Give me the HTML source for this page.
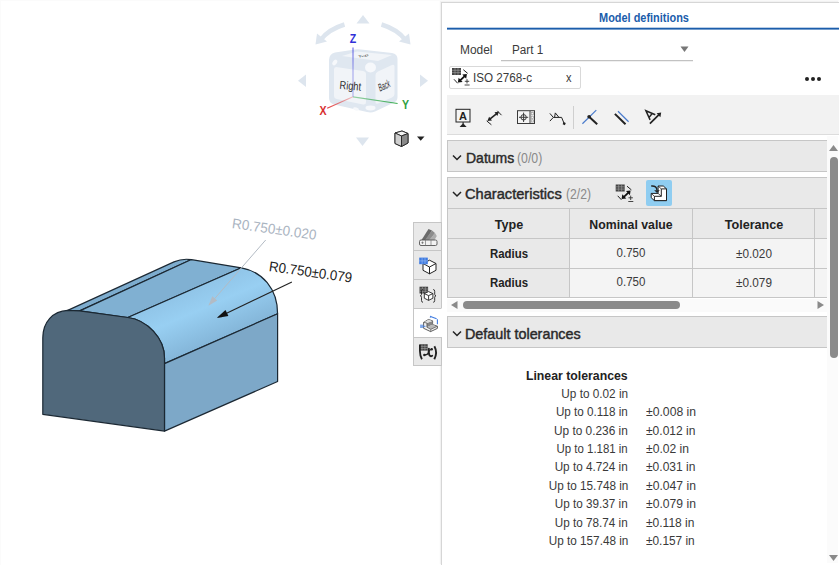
<!DOCTYPE html>
<html>
<head>
<meta charset="utf-8">
<title>Model definitions</title>
<style>
html,body{margin:0;padding:0;}
body{width:839px;height:565px;overflow:hidden;background:#fff;position:relative;font-family:"Liberation Sans",sans-serif;font-size:12px;color:#3a3a3a;}
.abs{position:absolute;}
.t{position:absolute;white-space:nowrap;line-height:1;transform-origin:0 0;}
.tr{position:absolute;white-space:nowrap;line-height:1;transform-origin:100% 0;text-align:right;}
.tc{position:absolute;white-space:nowrap;line-height:1;text-align:center;transform-origin:50% 0;}
.b{font-weight:bold;color:#222;}
.m{font-weight:normal;color:#2a2a2a;-webkit-text-stroke:0.45px #2a2a2a;}
#panel{left:441px;top:2px;width:398px;height:563px;background:#fff;border-left:1px solid #d6d6d6;border-top:1px solid #d6d6d6;box-sizing:border-box;box-shadow:-1px -1px 1px rgba(0,0,0,0.05);}
.sec{position:absolute;left:447px;width:380px;background:#e9e9e9;border:1px solid #c6c6c6;border-right:none;box-sizing:border-box;}
.cell{position:absolute;box-sizing:border-box;border-right:1px solid #c6c6c6;border-bottom:1px solid #c6c6c6;background:#f4f4f4;}
.hc{background:#e9e9e9;}
.sbtn{position:absolute;left:413px;width:29px;height:29px;box-sizing:border-box;background:#e9e9e9;border:1px solid #c6c6c6;}
</style>
</head>
<body>
<div class="abs" style="left:0;top:0;width:839px;height:1px;background:#fbfbfb;"></div><div class="abs" style="left:0;top:0;width:1px;height:565px;background:#fbfbfb;"></div>

<!-- ============ 3D VIEWPORT ============ -->
<svg class="abs" style="left:0;top:0" width="442" height="565" viewBox="0 0 442 565">
  <defs>
    <linearGradient id="filletg" gradientUnits="userSpaceOnUse" x1="200" y1="275" x2="228" y2="340">
      <stop offset="0" stop-color="#8dc0e3"/>
      <stop offset="0.45" stop-color="#98cff2"/>
      <stop offset="1" stop-color="#82b3d6"/>
    </linearGradient>
  </defs>
  <g stroke="#1b2833" stroke-width="1.2" stroke-linejoin="round">
    <!-- left strip -->
    <path d="M67.7,310.4 L174,261.9 Q182.3,258.2 191.5,259.7 L190.3,260 L79.7,310.9 Z" fill="#7dacce"/>
    <!-- middle band -->
    <path d="M79.7,310.9 L190.3,260 L191.5,259.7 L241.3,267.8 L127.8,317.5 Z" fill="#80b0d2"/>
    <!-- fillet band -->
    <path d="M127.8,317.5 L241.3,267.8 C262,271.5 277.6,288.5 277.6,313.8 L164.5,363.6 L164.5,358 C164.5,338 147,320 127.8,317.5 Z" fill="url(#filletg)"/>
    <!-- side face -->
    <path d="M164.5,363.6 L277.6,313.8 L277.6,381.5 L164.5,431.1 Z" fill="#7da8c8"/>
    <!-- front face -->
    <path d="M42.8,414.3 L42.8,338 C42.8,322 53,311 67.7,310.4 L79.7,310.9 L127.8,317.5 C147,320 164.5,338 164.5,358 L164.5,431.1 Z" fill="#50687b"/>
  </g>
  <!-- annotations -->
  <path d="M265.7,240 L209.5,304.5" stroke="#b3bbc4" stroke-width="1" fill="none"/>
  <path d="M208.4,305.7 L212.3,296.3 L217.2,300.6 Z" fill="#b3bbc4"/>
  <path d="M291.9,282 L224,314.4" stroke="#222" stroke-width="1.1" fill="none"/>
  <path d="M216.6,317.9 L225.5,310 L228.4,316.1 Z" fill="#111"/>
  <g font-family="Liberation Sans, sans-serif" font-size="14">
    <text x="0" y="0" fill="#aab4c1" transform="translate(231.5,228) rotate(8) scale(0.967 1)">R0.750±0.020</text>
    <text x="0" y="0" fill="#222" transform="translate(268.5,271) rotate(7.9) scale(0.953 1)">R0.750±0.079</text>
  </g>
</svg>

<!-- ============ VIEW CUBE ============ -->
<svg class="abs" style="left:290px;top:0" width="150" height="160" viewBox="290 0 150 160">
  <defs>
    <linearGradient id="zg" gradientUnits="userSpaceOnUse" x1="0" y1="47" x2="0" y2="97"><stop offset="0" stop-color="#3535dd" stop-opacity="0.85"/><stop offset="0.5" stop-color="#3535dd" stop-opacity="0.45"/><stop offset="1" stop-color="#3535dd" stop-opacity="0.4"/></linearGradient>
    <linearGradient id="xg2" gradientUnits="userSpaceOnUse" x1="353" y1="97" x2="327" y2="108"><stop offset="0" stop-color="#e03030" stop-opacity="0.25"/><stop offset="1" stop-color="#e03030" stop-opacity="0.95"/></linearGradient>
    <linearGradient id="yg2" gradientUnits="userSpaceOnUse" x1="353" y1="97" x2="398" y2="104"><stop offset="0" stop-color="#30a848" stop-opacity="0.45"/><stop offset="1" stop-color="#30a848" stop-opacity="0.95"/></linearGradient>
    <linearGradient id="xg" x1="1" y1="0" x2="0" y2="1"><stop offset="0" stop-color="#e03030" stop-opacity="0.3"/><stop offset="1" stop-color="#e03030" stop-opacity="1"/></linearGradient>
    <linearGradient id="yg" x1="0" y1="0" x2="1" y2="0"><stop offset="0" stop-color="#30a848" stop-opacity="0.5"/><stop offset="1" stop-color="#30a848" stop-opacity="1"/></linearGradient>
  </defs>
  <!-- arrows around -->
  <g fill="#dde5ee">
    <path d="M363,15 L369.5,23.5 L356.5,23.5 Z"/>
    <path d="M362.5,146 L369,137.5 L356,137.5 Z"/>
    <path d="M298,80.7 L306,74.5 L306,87 Z"/>
    <path d="M428,80.7 L420,74.5 L420,87 Z"/>
  </g>
  <g fill="none" stroke="#dde5ee" stroke-width="4.5">
    <path d="M344.5,24.5 C333,28 325,34 320.5,40"/>
    <path d="M381.5,24.5 C393,28 401,34 405.5,40"/>
  </g>
  <g fill="#dde5ee">
    <path d="M315.5,44.5 L317,33.5 L327,41.5 Z"/>
    <path d="M410.5,44.5 L409,33.5 L399,41.5 Z"/>
  </g>
  <!-- cube body -->
  <path d="M329,60 Q329,54 335,52.5 L355,49.5 Q358,49 361,49.5 L392,53 Q397.5,54 397.5,59 L397.5,97 Q397.5,101 394,102.5 L375,111.5 Q371,113 367,112 L334,104.5 Q329,103 329,98 Z" fill="#dfe7f0"/>
  <!-- faces -->
  <path d="M342,56 L357,51.5 L392,55 L378,61 Z" fill="#f1f4f8"/>
  <path d="M336,67 Q334,67 334,69.5 L334,96 Q334,98.5 336.5,99 L363,104.5 Q366,105 366,102 L366,74 Q366,71.5 363,71 Z" fill="#f1f4f8"/>
  <path d="M378,71.5 Q375.5,72.5 375.5,75 L375.5,102 Q375.5,104.5 378,103.5 L392,97.5 Q394.5,96.5 394.5,94 L394.5,66.5 Q394.5,64 392,65 Z" fill="#f1f4f8"/>
  <ellipse cx="370.5" cy="67.5" rx="5.5" ry="5" fill="#f6f8fb"/>
  <ellipse cx="334.8" cy="62.5" rx="2" ry="3.2" fill="#f6f8fb" transform="rotate(35 334.8 62.5)"/>
  <ellipse cx="370.5" cy="108" rx="5" ry="2.4" fill="#f6f8fb"/>
  <ellipse cx="356" cy="109" rx="3" ry="1.6" fill="#f6f8fb" transform="rotate(15 356 109)"/>
  <!-- axes -->
  <path d="M353,47.5 L353,96.8" stroke="url(#zg)" stroke-width="1" fill="none"/>
  <path d="M353,96.8 L327.2,108.3" stroke="url(#xg2)" stroke-width="1.2" fill="none"/>
  <path d="M353,96.8 L397.6,103.5" stroke="url(#yg2)" stroke-width="1.2" fill="none"/>
  <!-- labels -->
  <g font-family="Liberation Sans, sans-serif" font-weight="bold" font-size="12.5">
    <text x="353" y="43.3" text-anchor="middle" fill="#3030d8" transform="translate(353 0) scale(0.85 1) translate(-353 0)">Z</text>
    <text x="323" y="115" text-anchor="middle" fill="#d83030" transform="translate(323 0) scale(0.85 1) translate(-323 0)">X</text>
    <text x="405.5" y="109" text-anchor="middle" fill="#2fa040" transform="translate(405.5 0) scale(0.85 1) translate(-405.5 0)">Y</text>
  </g>
  <g font-family="Liberation Sans, sans-serif" fill="#2a2a2a">
    <text x="0" y="0" font-size="11.5" text-anchor="middle" transform="translate(350,89.8) rotate(5) scale(0.8 1)">Right</text>
    <text x="0" y="0" font-size="10.5" text-anchor="middle" transform="translate(385.3,89.2) rotate(-24) skewX(-8) scale(0.52 1.05)">Back</text>
    <text x="0" y="0" font-size="6.5" text-anchor="middle" fill="#444" transform="translate(363.5,56.8) rotate(-10) scale(1 0.45)">Top</text>
  </g>
  <!-- small cube icon + caret -->
  <g stroke="#222" stroke-width="0.9" stroke-linejoin="round">
    <path d="M395,133 L402,131 L408,133.5 L408,143 L401.5,146.5 L395,143.5 Z" fill="#d0d0d0"/>
    <path d="M395,133 L401.5,136 L408,133.5 L402,131 Z" fill="#f4f4f4"/>
    <path d="M401.5,136 L401.5,146.5 L408,143 L408,133.5 Z" fill="#8a8a8a"/>
    <path d="M395,133 L401.5,136 L401.5,146.5 L395,143.5 Z" fill="#cfcfcf"/>
  </g>
  <path d="M417,136.5 L424.5,136.5 L420.7,140.8 Z" fill="#222"/>
</svg>

<!-- ============ RIGHT PANEL ============ -->
<div id="panel" class="abs"></div>

<span class="tc b" id="t_title" style="transform:scaleX(0.910);left:583.6px;width:120px;top:11.8px;font-size:12px;color:#1b5dab;">Model definitions</span>

<span class="t" id="t_model" style="transform:scaleX(0.994);left:459.5px;top:43.5px;font-size:12px;">Model</span>
<span class="t" id="t_part" style="transform:scaleX(0.978);left:511.5px;top:43.5px;font-size:12px;">Part 1</span>

<svg class="abs" style="left:680px;top:46px" width="10" height="7"><path d="M0.5,0.5 L8.5,0.5 L4.5,6 Z" fill="#777"/></svg>

<div class="abs" style="left:449px;top:66px;width:131.5px;height:23px;box-sizing:border-box;border:1px solid #d9d9d9;border-radius:2px;background:#fff;"></div>
<span class="t" id="t_iso" style="transform:scaleX(0.972);left:473px;top:71.5px;font-size:12px;">ISO 2768-c</span>
<span class="t" id="t_x" style="transform:scaleX(0.917);left:566px;top:71.5px;font-size:12px;">x</span>
<div class="abs" style="left:805px;top:77px;width:4px;height:4px;border-radius:2px;background:#222;box-shadow:6px 0 0 #222,12px 0 0 #222;"></div>

<!-- toolbar -->
<div class="abs" style="left:447px;top:95px;width:392px;height:39px;background:#f2f2f2;border-bottom:1px solid #dcdcdc;box-sizing:content-box;"></div>
<div class="abs" style="left:573px;top:106px;width:1px;height:23px;background:#cfcfcf;"></div>

<!-- Datums -->
<div class="sec" style="top:140px;height:32px;"></div>
<span class="t m" id="t_datums" style="transform:scaleX(0.933);left:465.5px;top:150px;font-size:15px;">Datums</span>
<span class="t" id="t_d00" style="transform:scaleX(0.820);left:517px;top:150px;font-size:15px;color:#8a8a8a;">(0/0)</span>

<!-- Characteristics -->
<div class="sec" style="top:177px;height:32px;"></div>
<span class="t m" id="t_char" style="transform:scaleX(0.975);left:465px;top:186px;font-size:15px;">Characteristics</span>
<span class="t" id="t_c22" style="transform:scaleX(0.811);left:565.5px;top:186px;font-size:15px;color:#8a8a8a;">(2/2)</span>
<div class="abs" style="left:646px;top:179.5px;width:26px;height:26.5px;border-radius:2px;background:#8fcdf1;"></div>

<!-- table -->
<div class="abs" style="left:447px;top:208px;width:380px;height:90px;border-left:1px solid #c6c6c6;border-top:1px solid #c6c6c6;box-sizing:border-box;overflow:hidden;">
  <div class="cell hc" style="left:0;top:0;width:122px;height:30px;"></div>
  <div class="cell hc" style="left:122px;top:0;width:123px;height:30px;"></div>
  <div class="cell hc" style="left:245px;top:0;width:122px;height:30px;"></div>
  <div class="cell hc" style="left:367px;top:0;width:30px;height:30px;"></div>
  <div class="cell hc" style="left:0;top:30px;width:122px;height:30px;"></div>
  <div class="cell" style="left:122px;top:30px;width:123px;height:30px;"></div>
  <div class="cell" style="left:245px;top:30px;width:122px;height:30px;"></div>
  <div class="cell" style="left:367px;top:30px;width:30px;height:30px;"></div>
  <div class="cell hc" style="left:0;top:60px;width:122px;height:29px;"></div>
  <div class="cell" style="left:122px;top:60px;width:123px;height:29px;"></div>
  <div class="cell" style="left:245px;top:60px;width:122px;height:29px;"></div>
  <div class="cell" style="left:367px;top:60px;width:30px;height:29px;"></div>
</div>
<span class="tc b" id="t_type" style="transform:scaleX(0.970);left:478.5px;width:60px;top:218px;font-size:13px;">Type</span>
<span class="tc b" id="t_nom" style="transform:scaleX(0.945);left:571px;width:120px;top:218px;font-size:13px;">Nominal value</span>
<span class="tc b" id="t_tol" style="transform:scaleX(0.971);left:693.5px;width:120px;top:218px;font-size:13px;">Tolerance</span>
<span class="tc b" id="t_r1" style="transform:scaleX(0.950);left:478.5px;width:60px;top:247.5px;font-size:12px;">Radius</span>
<span class="tc" id="t_v1" style="transform:scaleX(0.959);left:601px;width:60px;top:246.5px;font-size:12px;">0.750</span>
<span class="tc" id="t_p1" style="transform:scaleX(0.980);left:723.5px;width:60px;top:247.5px;font-size:12px;">±0.020</span>
<span class="tc b" id="t_r2" style="transform:scaleX(0.950);left:478.5px;width:60px;top:277px;font-size:12px;">Radius</span>
<span class="tc" id="t_v2" style="transform:scaleX(0.959);left:601px;width:60px;top:276px;font-size:12px;">0.750</span>
<span class="tc" id="t_p2" style="transform:scaleX(0.980);left:723.5px;width:60px;top:277px;font-size:12px;">±0.079</span>

<!-- h scrollbar -->
<div class="abs" style="left:447px;top:299px;width:380px;height:13px;background:#fafafa;"></div>
<svg class="abs" style="left:450px;top:300px" width="9" height="10"><path d="M1,5 L7.5,1 L7.5,9 Z" fill="#8a8a8a"/></svg>
<div class="abs" style="left:463px;top:301px;width:217px;height:8px;border-radius:4px;background:#8a8a8a;"></div>
<svg class="abs" style="left:816px;top:300px" width="9" height="10"><path d="M8,5 L1.5,1 L1.5,9 Z" fill="#8a8a8a"/></svg>

<!-- Default tolerances -->
<div class="sec" style="top:316px;height:32px;"></div>
<span class="t m" id="t_def" style="transform:scaleX(0.957);left:465px;top:325.5px;font-size:15px;">Default tolerances</span>

<!-- v scrollbar -->
<div class="abs" style="left:827px;top:136px;width:11px;height:427px;background:#fbfbfb;"></div>
<svg class="abs" style="left:828px;top:144px" width="11" height="8"><path d="M5.5,1 L10,7 L1,7 Z" fill="#8a8a8a"/></svg>
<div class="abs" style="left:829.5px;top:157px;width:8px;height:200.5px;border-radius:4px;background:#8a8a8a;"></div>
<svg class="abs" style="left:828px;top:554px" width="11" height="8"><path d="M5.5,7 L10,1 L1,1 Z" fill="#8a8a8a"/></svg>

<!-- tolerances list -->
<span class="tr b" id="t_lin" style="transform:scaleX(0.945);right:211.5px;top:369px;font-size:13px;">Linear tolerances</span>
<span class="tr" id="t_u1" style="transform:scaleX(0.980);right:211px;top:388px;">Up to 0.02 in</span>
<span class="tr" id="t_u2" style="transform:scaleX(0.974);right:211px;top:406.4px;">Up to 0.118 in</span>
<span class="tr" id="t_u3" style="transform:scaleX(0.986);right:211px;top:424.7px;">Up to 0.236 in</span>
<span class="tr" id="t_u4" style="transform:scaleX(0.953);right:211px;top:443.1px;">Up to 1.181 in</span>
<span class="tr" id="t_u5" style="transform:scaleX(0.978);right:211px;top:461.4px;">Up to 4.724 in</span>
<span class="tr" id="t_u6" style="transform:scaleX(0.979);right:211px;top:479.8px;">Up to 15.748 in</span>
<span class="tr" id="t_u7" style="transform:scaleX(0.976);right:211px;top:498.1px;">Up to 39.37 in</span>
<span class="tr" id="t_u8" style="transform:scaleX(0.976);right:211px;top:516.5px;">Up to 78.74 in</span>
<span class="tr" id="t_u9" style="transform:scaleX(0.979);right:211px;top:534.8px;">Up to 157.48 in</span>
<span class="t" id="t_w2" style="transform:scaleX(1.016);left:646px;top:406.4px;">±0.008 in</span>
<span class="t" id="t_w3" style="transform:scaleX(1.002);left:646px;top:424.7px;">±0.012 in</span>
<span class="t" id="t_w4" style="transform:scaleX(1.009);left:646px;top:443.1px;">±0.02 in</span>
<span class="t" id="t_w5" style="transform:scaleX(1.002);left:646px;top:461.4px;">±0.031 in</span>
<span class="t" id="t_w6" style="transform:scaleX(1.012);left:646px;top:479.8px;">±0.047 in</span>
<span class="t" id="t_w7" style="transform:scaleX(1.012);left:646px;top:498.1px;">±0.079 in</span>
<span class="t" id="t_w8" style="transform:scaleX(1.000);left:646px;top:516.5px;">±0.118 in</span>
<span class="t" id="t_w9" style="transform:scaleX(0.988);left:646px;top:534.8px;">±0.157 in</span>


<!-- ============ ICON OVERLAY ============ -->
<svg class="abs" style="left:0;top:0" width="839" height="565" viewBox="0 0 839 565">
  <rect x="447" y="27.7" width="392" height="1.9" fill="#1b5dab"/>
  <rect x="501" y="60.2" width="192" height="1" fill="#b4b4b4"/>
  <!-- toolbar icon 1: datum -->
  <g fill="none" stroke="#222" stroke-width="1">
    <rect x="456" y="109.3" width="14" height="12.7" fill="#f5f5f5"/>
    <path d="M463.1,122 L463.1,124"/>
    <path d="M459.6,127 L466.6,127 L463.1,123.3 Z" fill="#222" stroke="none"/>
  </g>
  <text x="463.1" y="120.2" text-anchor="middle" font-family="Liberation Sans, sans-serif" font-weight="bold" font-size="11" fill="#222">A</text>
  <!-- toolbar icon 2: dimension -->
  <g fill="none" stroke="#222">
    <path d="M489.5,119.3 L497,113.3" stroke-width="1.7"/>
    <path d="M487.4,121 L492,120.5 L489.1,116.8 Z M499,111.8 L494.5,112.3 L497.3,115.9 Z" fill="#222" stroke="none"/>
    <path d="M486.7,120.9 L491.4,124.8 M497.3,110.8 L501.5,115.2" stroke-width="1"/>
  </g>
  <!-- toolbar icon 3: feature control frame -->
  <g fill="none" stroke="#3a3a3a" stroke-width="1">
    <rect x="517.5" y="110.7" width="17" height="12.8" fill="#f4f4f4"/>
    <path d="M530,111 L530,123.5"/>
    <circle cx="523.6" cy="117.3" r="2.7"/>
    <path d="M519,117.3 L528.2,117.3 M523.6,112.6 L523.6,122"/>
    <g stroke="#9a9a9a" stroke-width="0.7"><rect x="531.2" y="112.6" width="2.2" height="2.2"/><rect x="531.2" y="116.2" width="2.2" height="2.2"/><rect x="531.2" y="119.8" width="2.2" height="2.2"/></g>
  </g>
  <!-- toolbar icon 4: surface finish -->
  <g fill="none" stroke="#222" stroke-width="1">
    <path d="M549.9,113.4 L553.3,117.4 L549.9,121.1"/>
    <path d="M553.3,117.4 L561.6,117.4 L564.1,123.4"/>
    <path d="M554.6,117.4 L555.3,112.9 L558.8,117.2"/>
    <rect x="563" y="122.4" width="2.4" height="2.4" fill="#222" stroke="none" transform="rotate(20 564.2 123.6)"/>
  </g>
  <!-- toolbar icon 5 -->
  <path d="M582.4,123.7 L596.3,110.1" stroke="#4a7bcc" stroke-width="1.2" fill="none"/>
  <path d="M589.1,116.7 L597.2,124.3" stroke="#222" stroke-width="2" fill="none"/>
  <circle cx="589.1" cy="116.7" r="1.8" fill="#222"/>
  <!-- toolbar icon 6 -->
  <path d="M614.9,113.9 L625.5,124.3" stroke="#222" stroke-width="2" fill="none"/>
  <path d="M618,111.2 L628.6,121.7" stroke="#4a7bcc" stroke-width="1.2" fill="none"/>
  <!-- toolbar icon 7 -->
  <g fill="none" stroke="#222">
    <path d="M649.9,123.6 L659,114.7" stroke-width="1.7"/>
    <path d="M661.2,112.6 L656.6,113.3 L660.4,117.2 Z" fill="#222" stroke="none"/>
    <path d="M650.1,119.9 L645.9,110.7 L655.3,114.7 M648.9,117.6 L652.2,113.5" stroke-width="1.5"/>
  </g>

  <!-- ISO chip icon -->
  <g id="isoicon">
    <rect x="452" y="68" width="9" height="7" fill="#444"/>
    <path d="M452,70.3 H461 M452,72.6 H461 M455,68 V75 M458,68 V75" stroke="#a5a5a5" stroke-width="0.6" fill="none"/>
    <path d="M463.3,69.7 L467.7,73.4 M454,79.3 L457.7,83.3" stroke="#222" stroke-width="1" fill="none"/>
    <path d="M460.2,80.3 L464.7,76.1" stroke="#111" stroke-width="1.8" fill="none"/>
    <path d="M457.9,82.5 L462.6,81.9 L458.6,77.7 Z M466.9,74 L462.3,74.6 L466.2,78.7 Z" fill="#111"/>
    <path d="M464.8,81.3 H469.2 M467,79.1 V83.5 M464.6,85 H469.6" stroke="#333" stroke-width="0.9" fill="none"/>
  </g>
  <!-- Characteristics icon 1 (same glyph, shifted) -->
  <g transform="translate(163.7,116.5)">
    <rect x="452" y="68" width="9" height="7" fill="#444"/>
    <path d="M452,70.3 H461 M452,72.6 H461 M455,68 V75 M458,68 V75" stroke="#a5a5a5" stroke-width="0.6" fill="none"/>
    <path d="M463.3,69.7 L467.7,73.4 M454,79.3 L457.7,83.3" stroke="#222" stroke-width="1" fill="none"/>
    <path d="M460.2,80.3 L464.7,76.1" stroke="#111" stroke-width="1.8" fill="none"/>
    <path d="M457.9,82.5 L462.6,81.9 L458.6,77.7 Z M466.9,74 L462.3,74.6 L466.2,78.7 Z" fill="#111"/>
    <path d="M464.8,81.3 H469.2 M467,79.1 V83.5 M464.6,85 H469.6" stroke="#333" stroke-width="0.9" fill="none"/>
  </g>
  <!-- Characteristics icon 2 (L block with arrow) -->
  <g stroke="#222" stroke-width="1" stroke-linejoin="round" fill="#fff">
    <!-- silhouette -->
    <path d="M651.2,193.4 L658.1,193.4 L658.1,186 L663.3,186 L666.5,188.9 L666.5,200.6 L654.4,200.6 L651.2,197.7 Z"/>
    <!-- front L -->
    <path d="M654.4,196.3 L661.3,196.3 L661.3,188.9 L666.5,188.9 L666.5,200.6 L654.4,200.6 Z"/>
    <path d="M651.2,193.4 L654.4,196.3 M658.1,193.4 L661.3,196.3 M658.1,186 L661.3,188.9" fill="none" stroke-width="0.8"/>
  </g>
  <path d="M651.2,186 C655,185.6 657,187.3 657,190.5" stroke="#222" stroke-width="1.4" fill="none"/>
  <path d="M654.2,190.2 L659.8,190.2 L657,193 Z" fill="#222"/>

  <!-- chevrons -->
  <g fill="none" stroke="#222" stroke-width="1.5">
    <path d="M453,155.5 L457,159.5 L461,155.5"/>
    <path d="M453,192 L457,196 L461,192"/>
    <path d="M453,331.5 L457,335.5 L461,331.5"/>
  </g>
</svg>

<!-- ============ SIDE TOOLBAR ============ -->
<div class="sbtn" style="top:222px;height:29px;"></div>
<div class="sbtn" style="top:250px;height:30px;"></div>
<div class="sbtn" style="top:279px;height:30px;"></div>
<div class="sbtn" style="top:308px;height:30px;background:#fff;border-right-color:#fff;"></div>
<div class="sbtn" style="top:337px;height:29px;"></div>

<svg class="abs" style="left:410px;top:218px" width="32" height="154" viewBox="410 218 32 154">
  <!-- 1: appearance swatches -->
  <g stroke-linejoin="round">
    <path d="M421.5,240 L428.5,229 L432,230.5 L426,240 Z" fill="#6a6a6a"/>
    <path d="M425,240 L432,230.5 L435,233 L430,240 Z" fill="#8c8c8c"/>
    <path d="M429,240 L435,233 L436.8,236 L434.5,240 Z" fill="#adadad"/>
    <rect x="419.5" y="240" width="17.5" height="5.5" rx="1.5" fill="#f2f2f2" stroke="#555" stroke-width="0.9"/>
    <path d="M425.5,240 V245.5 M431,240 V245.5" stroke="#777" stroke-width="0.7" fill="none"/>
    <path d="M421.3,242.7 H423.7 M422.5,241.5 V243.9" stroke="#555" stroke-width="0.6" fill="none"/>
  </g>
  <!-- 2: cube with blue table -->
  <g stroke="#222" stroke-width="1" stroke-linejoin="round" fill="#fff">
    <path d="M423,263.5 L429.5,260.2 L436,263.5 L436,270.3 L429.5,273.8 L423,270.3 Z"/>
    <path d="M423,263.5 L429.5,267 L436,263.5 M429.5,267 L429.5,274" fill="none"/>
  </g>
  <rect x="419.2" y="257.6" width="8.6" height="6.6" fill="#3f7be0"/>
  <path d="M419.2,260.9 H427.8 M422.1,257.6 V264.2 M425,257.6 V264.2" stroke="#9fc0f5" stroke-width="0.6" fill="none"/>
  <!-- 3: table + cube in braces -->
  <rect x="419.5" y="286.7" width="8.6" height="6.8" fill="#444"/>
  <path d="M419.5,289 H428.1 M419.5,291.3 H428.1 M422.4,286.7 V293.5 M425.3,286.7 V293.5" stroke="#a5a5a5" stroke-width="0.6" fill="none"/>
  <g stroke="#222" stroke-width="0.9" stroke-linejoin="round" fill="#fff">
    <path d="M424.3,293.6 L428.6,291.6 L432.9,293.6 L432.9,298.2 L428.6,300.4 L424.3,298.2 Z"/>
    <path d="M424.3,293.6 L428.6,295.6 L432.9,293.6 M428.6,295.6 L428.6,300.4" fill="none"/>
  </g>
  <path d="M423,289.5 Q421.5,289.5 421.5,291.3 L421.5,294.3 Q421.5,295.6 420.3,295.8 Q421.5,296 421.5,297.3 L421.5,300.5 Q421.5,302.3 423,302.3" stroke="#222" stroke-width="0.9" fill="none"/>
  <path d="M433.2,289.5 Q434.7,289.5 434.7,291.3 L434.7,294.3 Q434.7,295.6 435.9,295.8 Q434.7,296 434.7,297.3 L434.7,300.5 Q434.7,302.3 433.2,302.3" stroke="#222" stroke-width="0.9" fill="none"/>
  <!-- 4: L block with blue dims (selected) -->
  <g stroke-linejoin="round">
    <path d="M423.6,322.4 L428.4,319.5 L432.6,320.8 L432.6,324.6 L437.4,326.2 L437.4,328.4 L430.6,331.6 L423.6,328.3 Z" fill="#f1f1f1" stroke="#3a3a3a" stroke-width="0.8"/>
    <path d="M426.9,323 L432.4,320.9 L432.4,324.8 L426.9,327.2 Z" fill="#868686"/>
    <path d="M426.9,327.2 L432.4,324.8 L437.1,326.4 L430.8,329.3 Z" fill="#b9b9b9"/>
    <path d="M423.8,322.6 L428.4,319.8 L432.3,321 L426.9,323 Z" fill="#dcdcdc"/>
    <path d="M423.6,322.4 L426.9,323 L426.9,327.2 L430.8,329.3 L437.3,326.3 M430.8,329.3 L430.6,331.6" fill="none" stroke="#3a3a3a" stroke-width="0.6"/>
  </g>
  <g stroke="#3f7be0" stroke-width="1.1" fill="none">
    <path d="M430.5,316.6 L436.6,318.7 M430.8,315.8 L430.2,317.6 M437.4,319.2 L437.4,324.2"/>
  </g>
  <rect x="420.1" y="324.6" width="3" height="3.4" fill="#7fa8ea"/>
  <path d="M423,326.3 L425.5,326.3" stroke="#3f7be0" stroke-width="0.9" fill="none"/>
  <!-- 5: (x) table -->
  <rect x="419.2" y="344.2" width="8.5" height="6.4" fill="#444"/>
  <path d="M419.2,346.4 H427.7 M419.2,348.5 H427.7 M422,344.2 V350.6 M424.9,344.2 V350.6" stroke="#a5a5a5" stroke-width="0.6" fill="none"/>
  <path d="M419.9,345 L419.9,351 Q420,356 421.9,359.2" stroke="#222" stroke-width="1.8" fill="none"/>
  <path d="M434.4,346.3 Q437.8,352.6 434.3,359.2" stroke="#222" stroke-width="1.9" fill="none"/>
  <g stroke="#222" fill="none" stroke-linecap="round">
    <path d="M428.9,348.6 C428.4,351 428.7,353.8 429.5,355.2 Q430.5,356.8 432.2,355.8" stroke-width="1.9"/>
    <path d="M429,351.6 Q429.9,349.5 431.6,349.2" stroke-width="1.3"/>
    <path d="M428.8,352.6 Q427.6,354.9 424.6,355" stroke-width="1.3"/>
  </g>
  <circle cx="431.7" cy="349.3" r="1.25" fill="#222"/><circle cx="424.4" cy="354.9" r="1.25" fill="#222"/>
</svg>

</body>
</html>
